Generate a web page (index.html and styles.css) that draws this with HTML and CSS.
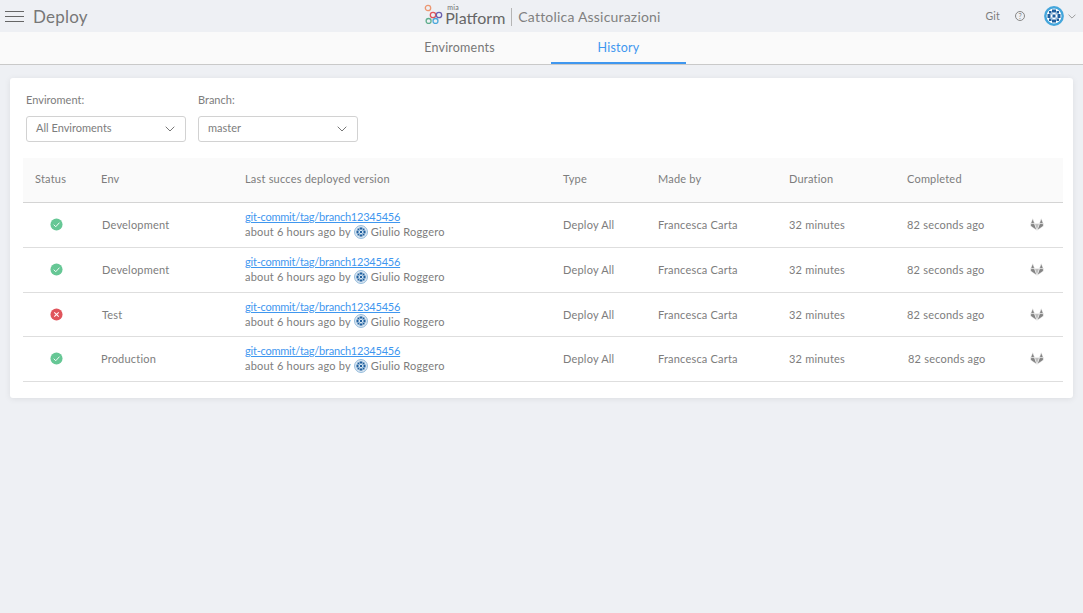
FILE: index.html
```html
<!DOCTYPE html>
<html lang="en">
    <head>
        <meta charset="UTF-8">
        <title>Deploy</title>
        <link rel="stylesheet" href="styles.css">
    </head>
    <body>
        <svg class="defs" width="0" height="0">
            <symbol id="pattern" viewBox="0 0 20 20">
                <g fill="#1f5f9e">
                    <rect x="8" y="3.5" width="4" height="3"/>
                    <rect x="8" y="13.5" width="4" height="3"/>
                    <rect x="3.5" y="8" width="3" height="4"/>
                    <rect x="13.5" y="8" width="3" height="4"/>
                    <rect x="8.5" y="8.5" width="3" height="3"/>
                    <rect x="5" y="5" width="2.5" height="2.5"/>
                    <rect x="12.5" y="5" width="2.5" height="2.5"/>
                    <rect x="5" y="12.5" width="2.5" height="2.5"/>
                    <rect x="12.5" y="12.5" width="2.5" height="2.5"/>
                </g>
                <g fill="#7fb2dc">
                    <rect x="7" y="7" width="1.5" height="1.5"/>
                    <rect x="11.5" y="7" width="1.5" height="1.5"/>
                    <rect x="7" y="11.5" width="1.5" height="1.5"/>
                    <rect x="11.5" y="11.5" width="1.5" height="1.5"/>
                </g>
            </symbol>
            <symbol id="avatar" viewBox="0 0 20 20">
                <circle cx="10" cy="10" r="8.7" fill="#fff" stroke="#44a6dc" stroke-width="2.4"/>
                <use href="#pattern" width="20" height="20"/>
            </symbol>
            <symbol id="mini" viewBox="0 0 20 20">
                <circle cx="10" cy="10" r="9.2" fill="#dfeaf4" stroke="#8db6d8" stroke-width="1.4"/>
                <use href="#pattern" width="20" height="20"/>
            </symbol>
            <symbol id="ok" viewBox="0 0 14 14">
                <circle cx="7" cy="7" r="6.5" fill="#66c795"/>
                <path d="M4 7.2l2.2 2.2L10.2 5" fill="none" stroke="#fff" stroke-width="1"/>
            </symbol>
            <symbol id="fail" viewBox="0 0 14 14">
                <circle cx="7" cy="7" r="6.5" fill="#e0555c"/>
                <path d="M4.6 4.6l4.8 4.8M9.4 4.6l-4.8 4.8" fill="none" stroke="#fff" stroke-width="1.1"/>
            </symbol>
            <symbol id="gitlab" viewBox="0 0 14 13">
                <g stroke="#fff" stroke-width=".5" fill="#858585">
                    <path d="M2.8 .4L4.6 5.6H.7z"/>
                    <path d="M11.2 .4L9.4 5.6h3.9z"/>
                    <path d="M.7 5.6h3.9L7 12.6 .6 8z"/>
                    <path d="M13.3 5.6H9.4L7 12.6 13.4 8z"/>
                    <path d="M4.6 5.6h4.8L7 12.6z" fill="#bdbdbd"/>
                </g>
            </symbol>
            <symbol id="chev" viewBox="0 0 10 6">
                <path d="M.7 .7L5 5l4.3-4.3" fill="none" stroke="currentColor" stroke-width="1"/>
            </symbol>
        </svg>

        <header class="topbar">
            <div class="topbar-left">
                <div class="burger"><span></span><span></span><span></span></div>
                <span class="page-title">Deploy</span>
            </div>
            <div class="brand">
                <svg class="brand-logo" width="20" height="20" viewBox="0 0 20 20" fill="none" stroke-width="1.3">
                    <circle cx="4" cy="4" r="2.7" stroke="#ec9670"/>
                    <circle cx="9" cy="11" r="2.7" stroke="#e0555c"/>
                    <circle cx="15" cy="11" r="2.7" stroke="#6a5fb0"/>
                    <circle cx="4.6" cy="17" r="2.5" stroke="#5fae8c"/>
                    <circle cx="11.5" cy="17" r="2.5" stroke="#4aa8dc"/>
                </svg>
                <div class="brand-name">
                    <span class="brand-mia">mia</span>
                    <span class="brand-platform">Platform</span>
                </div>
                <span class="brand-sep"></span>
                <span class="brand-client">Cattolica Assicurazioni</span>
            </div>
            <div class="topbar-right">
                <span class="git">Git</span>
                <span class="help">?</span>
                <svg class="user-avatar"><use href="#avatar"/></svg>
                <svg class="user-chev"><use href="#chev"/></svg>
            </div>
        </header>

        <nav class="tabs">
            <a class="tab">Enviroments</a>
            <a class="tab active">History</a>
        </nav>

        <main class="card">
            <div class="filters">
                <div class="filter">
                    <label>Enviroment:</label>
                    <div class="select"><span>All Enviroments</span><svg class="select-chev"><use href="#chev"/></svg></div>
                </div>
                <div class="filter">
                    <label>Branch:</label>
                    <div class="select"><span>master</span><svg class="select-chev"><use href="#chev"/></svg></div>
                </div>
            </div>

            <table class="history">
                <colgroup>
                    <col class="c-status"><col class="c-env"><col class="c-version"><col class="c-type">
                    <col class="c-by"><col class="c-dur"><col class="c-done"><col class="c-git">
                </colgroup>
                <thead>
                    <tr><th>Status</th><th>Env</th><th>Last succes deployed version</th><th>Type</th><th>Made by</th><th>Duration</th><th>Completed</th><th></th></tr>
                </thead>
                <tbody>
                    <tr>
                        <td class="st"><svg class="status"><use href="#ok"/></svg></td>
                        <td class="env">Development</td>
                        <td class="version"><a class="commit">git-commit/tag/branch12345456</a><div class="meta">about 6 hours ago by <svg class="mini"><use href="#mini"/></svg> Giulio Roggero</div></td>
                        <td>Deploy All</td><td>Francesca Carta</td><td>32 minutes</td><td>82 seconds ago</td>
                        <td><svg class="lab"><use href="#gitlab"/></svg></td>
                    </tr>
                    <tr>
                        <td class="st"><svg class="status"><use href="#ok"/></svg></td>
                        <td class="env">Development</td>
                        <td class="version"><a class="commit">git-commit/tag/branch12345456</a><div class="meta">about 6 hours ago by <svg class="mini"><use href="#mini"/></svg> Giulio Roggero</div></td>
                        <td>Deploy All</td><td>Francesca Carta</td><td>32 minutes</td><td>82 seconds ago</td>
                        <td><svg class="lab"><use href="#gitlab"/></svg></td>
                    </tr>
                    <tr class="short">
                        <td class="st"><svg class="status"><use href="#fail"/></svg></td>
                        <td class="env">Test</td>
                        <td class="version"><a class="commit">git-commit/tag/branch12345456</a><div class="meta">about 6 hours ago by <svg class="mini"><use href="#mini"/></svg> Giulio Roggero</div></td>
                        <td>Deploy All</td><td>Francesca Carta</td><td>32 minutes</td><td>82 seconds ago</td>
                        <td><svg class="lab"><use href="#gitlab"/></svg></td>
                    </tr>
                    <tr>
                        <td class="st"><svg class="status"><use href="#ok"/></svg></td>
                        <td>Production</td>
                        <td class="version"><a class="commit">git-commit/tag/branch12345456</a><div class="meta">about 6 hours ago by <svg class="mini"><use href="#mini"/></svg> Giulio Roggero</div></td>
                        <td>Deploy All</td><td>Francesca Carta</td><td>32 minutes</td><td class="done-last">82 seconds ago</td>
                        <td><svg class="lab"><use href="#gitlab"/></svg></td>
                    </tr>
                </tbody>
            </table>
        </main>
    </body>
</html>
```

FILE: styles.css
```css
* {
    box-sizing: border-box;
}
html, body {
    height: 100%;
}
body {
    margin: 0;
    background-color: #eef0f4;
    font-family: "Lato", "Liberation Sans", sans-serif;
    font-size: 11px;
    letter-spacing: 0.2px;
    color: #7d7d7d;
    overflow: hidden;
}
.defs {
    display: block;
    height: 0;
}

/* top bar */
.topbar {
    display: grid;
    grid-template-columns: 1fr auto 1fr;
    align-items: center;
    height: 32px;
    padding: 0 7px 0 5px;
}
.topbar-left {
    display: flex;
    align-items: center;
    gap: 9px;
}
.burger {
    display: flex;
    flex-direction: column;
    gap: 4px;
    width: 19px;
}
.burger span {
    height: 1px;
    background-color: #666;
}
.page-title {
    font-size: 17px;
    color: #777;
}
.brand {
    display: flex;
    align-items: center;
    margin-left: 4px;
    color: #6d6d6d;
}
.brand-logo {
    margin-bottom: 4px;
}
.brand-name {
    display: flex;
    flex-direction: column;
    margin-left: 1px;
    margin-bottom: 4px;
}
.brand-mia {
    font-size: 7px;
    line-height: 7px;
    margin-left: 2px;
}
.brand-platform {
    font-size: 16px;
    line-height: 14px;
    letter-spacing: 0;
    color: #666;
}
.brand-sep {
    width: 1px;
    height: 18px;
    margin: 2px 6px 0;
    background-color: #b5b5b5;
}
.brand-client {
    font-size: 14px;
    color: #808080;
}
.topbar-right {
    display: flex;
    align-items: center;
    justify-content: flex-end;
    font-size: 10.5px;
}
.help {
    display: flex;
    align-items: center;
    justify-content: center;
    width: 10px;
    height: 10px;
    margin-left: 15px;
    border: 1px solid #888;
    border-radius: 50%;
    font-size: 7px;
    letter-spacing: 0;
}
.user-avatar {
    width: 20px;
    height: 20px;
    margin-left: 19px;
}
.user-chev {
    width: 8px;
    height: 5px;
    margin-left: 4px;
    color: #888;
}

/* tabs */
.tabs {
    display: flex;
    justify-content: center;
    gap: 24px;
    height: 33px;
    padding-right: 5px;
    background-color: #fafafa;
    border-bottom: 1px solid #c9c9c9;
}
.tab {
    width: 135px;
    height: 32px;
    font-size: 12.5px;
    line-height: 31px;
    text-align: center;
    color: #777;
}
.tab.active {
    color: #3f97ef;
    border-bottom: 2px solid #3f97ef;
}

/* card */
.card {
    height: 320px;
    margin: 13px 10px 0;
    padding: 14px 10px 0 13px;
    background-color: #fff;
    border-radius: 3px;
    box-shadow: 0 1px 6px rgba(0, 0, 0, 0.08);
}
.filters {
    display: flex;
    gap: 12px;
    padding-left: 3px;
    letter-spacing: 0;
}
.filter label {
    display: block;
    height: 16px;
    line-height: 16px;
    margin-bottom: 8px;
}
.select {
    display: flex;
    align-items: center;
    justify-content: space-between;
    width: 160px;
    height: 26px;
    padding: 0 10px 3px 9px;
    border: 1px solid #d2d2d2;
    border-radius: 3px;
}
.select-chev {
    width: 10px;
    height: 6px;
    margin-top: 3px;
    color: #777;
}

/* table */
.history {
    width: 1040px;
    margin-top: 16px;
    border-collapse: collapse;
    table-layout: fixed;
}
.c-status { width: 66px; }
.c-env { width: 144px; }
.c-version { width: 318px; }
.c-type { width: 95px; }
.c-by { width: 131px; }
.c-dur { width: 118px; }
.c-done { width: 123px; }
.c-git { width: 45px; }
.history th {
    height: 44px;
    padding: 0 0 2px 12px;
    background-color: #fafafa;
    border-bottom: 1px solid #d4d4d4;
    font-weight: 400;
    text-align: left;
}
.history td {
    height: 45px;
    padding: 0 0 0 12px;
    border-bottom: 1px solid #dedede;
}
.history tr.short td {
    height: 44px;
}
.history td.st {
    padding-left: 27px;
}
.history td.env {
    padding-left: 13px;
}
.history td.version {
    padding-bottom: 1px;
}
.history td.done-last {
    padding-left: 13px;
}
.status {
    display: block;
    width: 13px;
    height: 13px;
}
.commit {
    display: block;
    color: #3f97ef;
    letter-spacing: -0.02em;
    text-decoration: underline;
    line-height: 15px;
}
.meta {
    display: flex;
    align-items: center;
    gap: 3px;
    line-height: 15px;
}
.mini {
    width: 14px;
    height: 14px;
}
.lab {
    display: block;
    width: 14px;
    height: 13px;
}
```
